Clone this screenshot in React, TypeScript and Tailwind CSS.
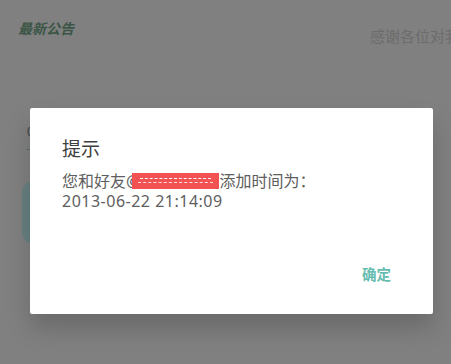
import React from "react";

export default function App() {
  return (
    <div
      className="relative w-[451px] h-[364px] overflow-hidden bg-[#808080]"
      style={{ fontFamily: '"Noto Sans", "Noto Sans CJK SC", sans-serif' }}
    >
      {/* dimmed page behind */}
      <div className="flex items-start whitespace-nowrap pl-[18px] pt-[19px]">
        <span className="text-[14px] font-bold italic text-[#3b5546] leading-[20px]">最新公告</span>
        <span className="ml-[296px] mt-[7px] shrink-0 text-[15px] text-[#6c6c6c] leading-[20px]">感谢各位对我们的支持</span>
      </div>
      <div className="mx-[27px] mt-[78px] h-[26px] border-b border-[#4f6d66] text-[12px] leading-[16px] text-[#3c3c3c]">
        0
      </div>
      <div className="mx-[22px] mt-[31px] h-[63px] rounded-[12px] bg-gradient-to-r from-[#688080] to-[#3b6a8d]" />

      {/* dialog */}
      <div className="absolute left-[30px] top-[108px] w-[403px] h-[206px] rounded-[2px] bg-white shadow-[0_14px_24px_rgba(0,0,0,0.18)] flex flex-col pl-[32px] pr-[42px] pt-[28px]">
        <div className="text-[19px] leading-[26px] text-[#404040]">提示</div>
        <div className="mt-[9px] text-[16px] leading-[20px] text-[#5e5e5e]">
          <div className="flex items-center whitespace-nowrap">
            <span>您和好友</span>
            <span>@</span>
            <span className="relative -ml-[8px] inline-block w-[87px] h-[16px] bg-[#f25252]">
              <span className="absolute left-[8px] right-[8px] top-[5px] border-t border-dashed border-white" />
              <span className="absolute left-[6px] right-[6px] top-[9px] border-t border-dashed border-white/80" />
            </span>
            <span>添加时间为：</span>
          </div>
          <div className="whitespace-nowrap tracking-[0.5px]">2013-06-22 21:14:09</div>
        </div>
        <div className="mt-auto mb-[30px] self-end text-[14.5px] font-bold leading-[20px] text-[#66bcb0]">确定</div>
      </div>
    </div>
  );
}
